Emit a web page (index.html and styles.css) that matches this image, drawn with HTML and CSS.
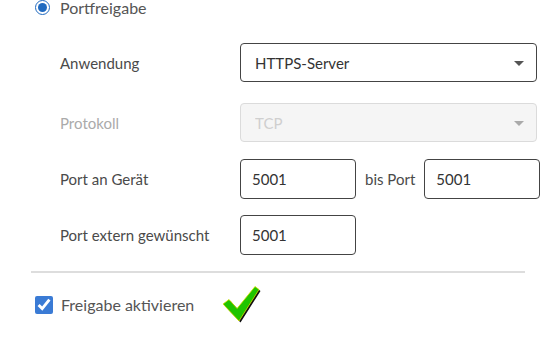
FILE: index.html
```html
<!DOCTYPE html>
<html lang="de">
<head>
    <meta charset="UTF-8">
    <meta name="viewport" content="width=device-width, initial-scale=1.0">
    <title>Portfreigabe</title>
    <link rel="stylesheet" href="styles.css">
</head>
<body>
    <div class="panel">
        <label class="radio-row">
            <input type="radio" name="art" checked>
            <span>Portfreigabe</span>
        </label>

        <div class="form">
            <div class="row">
                <label class="lbl" for="anwendung">Anwendung</label>
                <div class="select">
                    <select id="anwendung">
                        <option>HTTPS-Server</option>
                    </select>
                </div>
            </div>
            <div class="row row-proto">
                <label class="lbl disabled" for="protokoll">Protokoll</label>
                <div class="select is-disabled">
                    <select id="protokoll" disabled>
                        <option>TCP</option>
                    </select>
                </div>
            </div>
            <div class="row row-port">
                <label class="lbl" for="port_von">Port an Gerät</label>
                <input class="field" type="text" id="port_von" value="5001">
                <span class="bis">bis Port</span>
                <input class="field" type="text" id="port_bis" value="5001">
            </div>
            <div class="row row-ext">
                <label class="lbl" for="port_ext">Port extern gewünscht</label>
                <input class="field" type="text" id="port_ext" value="5001">
            </div>
        </div>

        <hr class="sep">

        <div class="check-row">
            <label class="check">
                <input type="checkbox" checked>
                <span>Freigabe aktivieren</span>
            </label>
            <!-- status ok -->
            <svg class="ok" width="38" height="37" viewBox="0 0 38 37">
                <path d="M1.5 19.5 L7.5 15 L15.5 24 L33.5 2 L37.5 5 L17.5 36.5 Z" fill="#111"/>
                <path d="M0 18 L6 13.5 L14 22.5 L32 0.5 L36 3.5 L16 35 Z" fill="#1fc400" stroke="#d8e000" stroke-width="0.8"/>
            </svg>
        </div>
    </div>
</body>
</html>
```

FILE: styles.css
```css
/* Portfreigabe dialog */
body { margin: 0; font-family: Lato, "Open Sans", sans-serif; font-size: 15px; color: #4a4a4a; background: #fff; }
.panel { width: 554px; }

.radio-row { display: flex; align-items: center; height: 15px; padding-left: 35px; gap: 10px; color: #555; font-size: 16px; }
.radio-row input { width: 15px; height: 15px; margin: 0; accent-color: #3a86de; }

.form { padding-left: 60px; margin-top: 28px; }
.row { display: flex; align-items: center; }
.lbl { width: 180px; flex: none; }
.lbl.disabled { color: #aaa; }
.row-proto { margin-top: 21px; }
.row-port { margin-top: 17px; }
.row-ext { margin-top: 16px; }

.select { position: relative; width: 297px; height: 39px; }
.select select { width: 100%; height: 100%; appearance: none; -webkit-appearance: none; border: 1px solid #444; border-radius: 4px; background: #fff; padding: 0 14px; font: inherit; color: #333; }
.select::after { content: ""; position: absolute; right: 13px; top: 18px; border-left: 5px solid transparent; border-right: 5px solid transparent; border-top: 5px solid #555; }
.select.is-disabled select { background: #f1f1f1; border-color: #ccc; color: #bbb; }
.select.is-disabled::after { border-top-color: #aaa; }

.field { width: 116px; height: 40px; box-sizing: border-box; border: 1px solid #444; border-radius: 4px; padding: 0 11px; font: inherit; color: #333; }
.bis { margin: 0 9px 0 9px; }

.sep { border: 0; border-top: 2px solid #ddd; width: 494px; margin: 16px 0 0 31px; }

.check-row { display: flex; align-items: center; padding-left: 35px; margin-top: 13px; }
.check { display: flex; align-items: center; gap: 8px; color: #555; font-size: 16px; }
.check input { width: 18px; height: 18px; margin: 0; accent-color: #3a7bd5; }
.ok { margin-left: 29px; }
```
